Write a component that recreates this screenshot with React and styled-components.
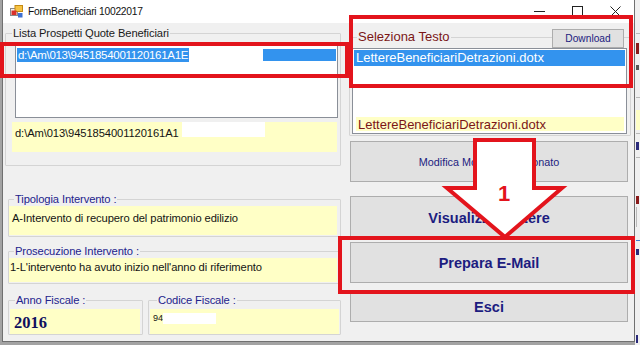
import React from "react";
import styled, { createGlobalStyle } from "styled-components";

const GlobalStyle = createGlobalStyle`
  html, body {
    margin: 0;
    padding: 0;
  }
  body {
    width: 640px;
    height: 345px;
    overflow: hidden;
    background: #a3a3a3;
    font-family: "Liberation Sans", Arial, sans-serif;
  }
`;

const App = () => {
  return (
    <Screen>
      <GlobalStyle />
      <Window>
        <TitleBar>
          <AppIcon />
          <Title>FormBeneficiari 10022017</Title>
          <Controls>
            <Control>
              <svg width="11" height="11" viewBox="0 0 11 11">
                <line x1="0" y1="5.5" x2="11" y2="5.5" stroke="#222" strokeWidth="1" />
              </svg>
            </Control>
            <Control>
              <svg width="11" height="11" viewBox="0 0 11 11">
                <rect x="0.5" y="0.5" width="10" height="10" fill="none" stroke="#222" strokeWidth="1" />
              </svg>
            </Control>
            <Control>
              <svg width="11" height="11" viewBox="0 0 11 11">
                <path d="M0.5 0.5 L10.5 10.5 M10.5 0.5 L0.5 10.5" stroke="#222" strokeWidth="1" />
              </svg>
            </Control>
          </Controls>
        </TitleBar>

        <Body>
          <LeftColumn>
            <GroupBox $width={336} $pad="2px 4px 13px 6px">
              <Legend $offset={0}>Lista Prospetti Quote Beneficiari</Legend>
              <ListBox $width={323} $height={76} $indent={3}>
                <PathRow>
                  <Selected>d:\Am\013\9451854001120161A1E</Selected>
                  <Filler />
                  <BlueBlock />
                </PathRow>
              </ListBox>
              <YellowField $height={30} $width={325} $top={4} $align="flex-start">
                <FieldText>d:\Am\013\9451854001120161A1</FieldText>
                <Blank $width={83} $height={15} />
              </YellowField>
            </GroupBox>

            <GroupBox $width={333} $top={27} $left={3} $pad="0 4px 1px 0">
              <Legend $offset={5} $color="#23238c">Tipologia Intervento :</Legend>
              <YellowField $height={29} $width={328}>
                <FieldText $pad="5px 3px">A-Intervento di recupero del patrimonio edilizio</FieldText>
              </YellowField>
            </GroupBox>

            <GroupBox $width={333} $top={8} $left={3} $pad="0 4px 1px 0">
              <Legend $offset={5} $color="#23238c">Prosecuzione Intervento :</Legend>
              <YellowField $height={24} $width={328}>
                <FieldText $pad="2px 1px">1-L'intervento ha avuto inizio nell'anno di riferimento</FieldText>
              </YellowField>
            </GroupBox>

            <FiscalRow>
              <GroupBox $width={135} $pad="2px 2px 0 1px">
                <Legend $offset={5} $color="#23238c">Anno Fiscale :</Legend>
                <YellowField $height={25} $width={130}>
                  <Year>2016</Year>
                </YellowField>
              </GroupBox>
              <GroupBox $width={193} $pad="2px 1px 0 1px">
                <Legend $offset={7} $color="#23238c">Codice Fiscale :</Legend>
                <YellowField $height={25} $width={189} $align="flex-start">
                  <SmallText>94</SmallText>
                  <Blank $width={53} $height={11} $top={4} />
                </YellowField>
              </GroupBox>
            </FiscalRow>
          </LeftColumn>

          <RightColumn>
            <GroupBox $width={282} $top={6} $left={1} $pad="0 1px 1px 2px">
              <BigLegend>Seleziona Testo</BigLegend>
              <DownloadRow>
                <SmallButton>Download</SmallButton>
              </DownloadRow>
              <TemplateList>
                <TemplateSelected>LettereBeneficiariDetrazioni.dotx</TemplateSelected>
                <TemplateCurrent>LettereBeneficiariDetrazioni.dotx</TemplateCurrent>
              </TemplateList>
            </GroupBox>

            <ActionButton $top={5} $height={41}>Modifica Modello Selezionato</ActionButton>
            <ActionButton $top={14} $height={43} $bold>Visualizza Lettere</ActionButton>
            <ActionButton $top={3} $height={41} $bold>Prepara E-Mail</ActionButton>
            <ActionButton $top={9} $height={30} $bold>Esci</ActionButton>
          </RightColumn>
        </Body>

        <Highlight $x={-3} $y={42} $w={349} $h={36} />
        <Highlight $x={346} $y={15} $w={284} $h={73} />
        <Highlight $x={335} $y={236} $w={297} $h={58} />

        <Arrow viewBox="0 0 130 110" width="130" height="110">
          <polygon
            points="35,5 94,5 94,53 122,53 65,102 7,53 35,53"
            fill="#ffffff"
            stroke="#e3141c"
            strokeWidth="4"
          />
          <text x="64" y="66" textAnchor="middle" fontFamily="Liberation Sans, Arial, sans-serif" fontWeight="700" fontSize="22" fill="#e3141c">
            1
          </text>
        </Arrow>
      </Window>

      <BackApp>
        <BackBar $top={33} $color="#b9b9b9" $height={1} />
        <BackBar $top={43} $color="#8a1a1a" $height={11} $width={3} />
        <BackBar $top={65} $color="#555" $height={5} $width={3} />
        <BackBar $top={97} $color="#b9b9b9" $height={1} />
        <BackBar $top={110} $color="#ffffc6" $height={20} />
        <BackBar $top={133} $color="#b9b9b9" $height={1} />
        <BackBar $top={142} $color="#2a2a7a" $height={8} $width={3} />
        <BackBar $top={157} $color="#b9b9b9" $height={1} />
        <BackBar $top={196} $color="#8a1a1a" $height={8} $width={3} />
        <BackBar $top={207} $color="#b9b9b9" $height={20} $width={1} />
        <BackBar $top={240} $color="#3d7bd0" $height={1} />
        <BackBar $top={249} $color="#2a2a7a" $height={6} $width={3} />
        <BackBar $top={335} $color="#2a2a7a" $height={8} $width={2} />
      </BackApp>
    </Screen>
  );
};

const AppIcon = () => (
  <svg width="13" height="13" viewBox="0 0 13 13">
    <rect x="0.5" y="3.5" width="7" height="7" fill="#f1f1f1" stroke="#8a8a8a" />
    <rect x="5" y="0.5" width="7.5" height="6" fill="#f6c343" stroke="#c48a14" />
    <rect x="1.5" y="5.5" width="5" height="4.5" fill="#d8302a" />
    <rect x="8" y="8" width="4.5" height="4.5" fill="#3d6fd1" />
  </svg>
);

export default App;

const Screen = styled.div`
  display: flex;
  width: 640px;
  height: 345px;
  background: #a3a3a3;
  overflow: hidden;
`;

const Window = styled.div`
  position: relative;
  flex-shrink: 0;
  width: 631px;
  height: 341px;
  margin-left: 2px;
  border: 1px solid #707070;
  border-top: none;
  background: #f0f0f0;
  display: flex;
  flex-direction: column;
`;

const TitleBar = styled.div`
  display: flex;
  align-items: center;
  height: 23px;
  padding-left: 7px;
  background: #ffffff;
`;

const Title = styled.span`
  margin-left: 5px;
  font-size: 10.3px;
  letter-spacing: -0.25px;
  color: #111;
`;

const Controls = styled.div`
  display: flex;
  margin-left: auto;
  height: 100%;
`;

const Control = styled.div`
  display: flex;
  align-items: center;
  justify-content: center;
  width: 38px;
  height: 100%;
`;

const Body = styled.div`
  display: flex;
  flex: 1;
  padding-left: 2px;
`;

const LeftColumn = styled.div`
  display: flex;
  flex-direction: column;
  width: 336px;
`;

const RightColumn = styled.div`
  display: flex;
  flex-direction: column;
  margin-left: 7px;
  width: 284px;
`;

const GroupBox = styled.fieldset`
  box-sizing: border-box;
  width: ${(p) => p.$width}px;
  margin: ${(p) => p.$top || 4}px 0 0 ${(p) => p.$left || 0}px;
  padding: ${(p) => p.$pad};
  border: 1px solid #d4d4d4;
  border-radius: 1px;
  min-width: 0;
`;

const Legend = styled.legend`
  margin-left: ${(p) => p.$offset}px;
  padding: 0 1px;
  font-size: 11.2px;
  line-height: 13px;
  letter-spacing: -0.12px;
  color: ${(p) => p.$color || "#1a1a1a"};
`;

const BigLegend = styled.legend`
  margin-left: 5px;
  padding: 0 1px;
  font-size: 13px;
  line-height: 16px;
  color: #7b1616;
`;

const ListBox = styled.div`
  box-sizing: border-box;
  width: ${(p) => p.$width}px;
  height: ${(p) => p.$height}px;
  margin-left: ${(p) => p.$indent}px;
  padding: 5px 1px 0 1px;
  background: #ffffff;
  border: 1px solid #8a8f98;
`;

const PathRow = styled.div`
  display: flex;
  height: 14px;
`;

const Selected = styled.span`
  display: block;
  background: #3393ee;
  color: #ffffff;
  font-size: 11.5px;
  line-height: 14px;
  letter-spacing: -0.3px;
  padding: 0 1px;
`;

const Filler = styled.div`
  flex: 1;
`;

const BlueBlock = styled.div`
  width: 73px;
  height: 12px;
  margin-top: 1px;
  background: #3393ee;
`;

const YellowField = styled.div`
  box-sizing: border-box;
  display: flex;
  align-items: ${(p) => p.$align || "stretch"};
  width: ${(p) => p.$width}px;
  height: ${(p) => p.$height}px;
  margin-top: ${(p) => p.$top || 0}px;
  background: #ffffc6;
`;

const FieldText = styled.span`
  padding: ${(p) => p.$pad || "4px 3px"};
  font-size: 11.2px;
  line-height: 14px;
  letter-spacing: -0.1px;
  color: #141414;
  white-space: nowrap;
`;

const Blank = styled.div`
  width: ${(p) => p.$width}px;
  height: ${(p) => p.$height}px;
  margin-top: ${(p) => p.$top || 0}px;
  background: #ffffff;
`;

const FiscalRow = styled.div`
  display: flex;
  gap: 5px;
  margin-top: 6px;
  margin-left: 3px;
`;

const Year = styled.span`
  padding: 4px 0 0 4px;
  font-family: "Liberation Serif", "Times New Roman", serif;
  font-weight: 700;
  font-size: 16.5px;
  color: #10105e;
`;

const SmallText = styled.span`
  padding: 3px 0 0 3px;
  font-size: 9px;
  line-height: 12px;
  color: #141414;
`;

const DownloadRow = styled.div`
  display: flex;
  justify-content: flex-end;
  margin-top: -16px;
  padding-right: 5px;
`;

const SmallButton = styled.div`
  box-sizing: border-box;
  display: flex;
  align-items: center;
  justify-content: center;
  width: 72px;
  height: 19px;
  background: #e1e1e1;
  border: 1px solid #adadad;
  font-size: 10.2px;
  color: #1c1c80;
`;

const TemplateList = styled.div`
  box-sizing: border-box;
  display: flex;
  flex-direction: column;
  justify-content: space-between;
  width: 275px;
  height: 86px;
  padding: 1px 1px 2px 1px;
  background: #ffffff;
  border: 1px solid #8a8f98;
`;

const TemplateSelected = styled.div`
  height: 16px;
  padding-left: 2px;
  background: #3393ee;
  color: #ffffff;
  font-size: 13px;
  line-height: 16px;
`;

const TemplateCurrent = styled.div`
  height: 14px;
  margin: 0 1px 0 2px;
  padding-left: 2px;
  background: #ffffc6;
  color: #7b1616;
  font-size: 13px;
  line-height: 15px;
`;

const ActionButton = styled.div`
  box-sizing: border-box;
  display: flex;
  align-items: center;
  justify-content: center;
  width: 278px;
  height: ${(p) => p.$height}px;
  margin: ${(p) => p.$top}px 0 0 2px;
  background: #e1e1e1;
  border: 1px solid #adadad;
  color: #1c1c80;
  font-size: ${(p) => (p.$bold ? "14.5px" : "10.8px")};
  font-weight: ${(p) => (p.$bold ? 700 : 400)};
`;

const Highlight = styled.div`
  position: absolute;
  box-sizing: border-box;
  left: ${(p) => p.$x}px;
  top: ${(p) => p.$y}px;
  width: ${(p) => p.$w}px;
  height: ${(p) => p.$h}px;
  border: 4px solid #e3141c;
  pointer-events: none;
`;

const Arrow = styled.svg`
  position: absolute;
  left: 437px;
  top: 135px;
  overflow: visible;
`;

const BackApp = styled.div`
  position: relative;
  flex: 1;
  height: 345px;
  background: #f0f0f0;
  overflow: hidden;
`;

const BackBar = styled.div`
  position: absolute;
  left: 1px;
  top: ${(p) => p.$top}px;
  width: ${(p) => p.$width || 6}px;
  height: ${(p) => p.$height}px;
  background: ${(p) => p.$color};
`;
